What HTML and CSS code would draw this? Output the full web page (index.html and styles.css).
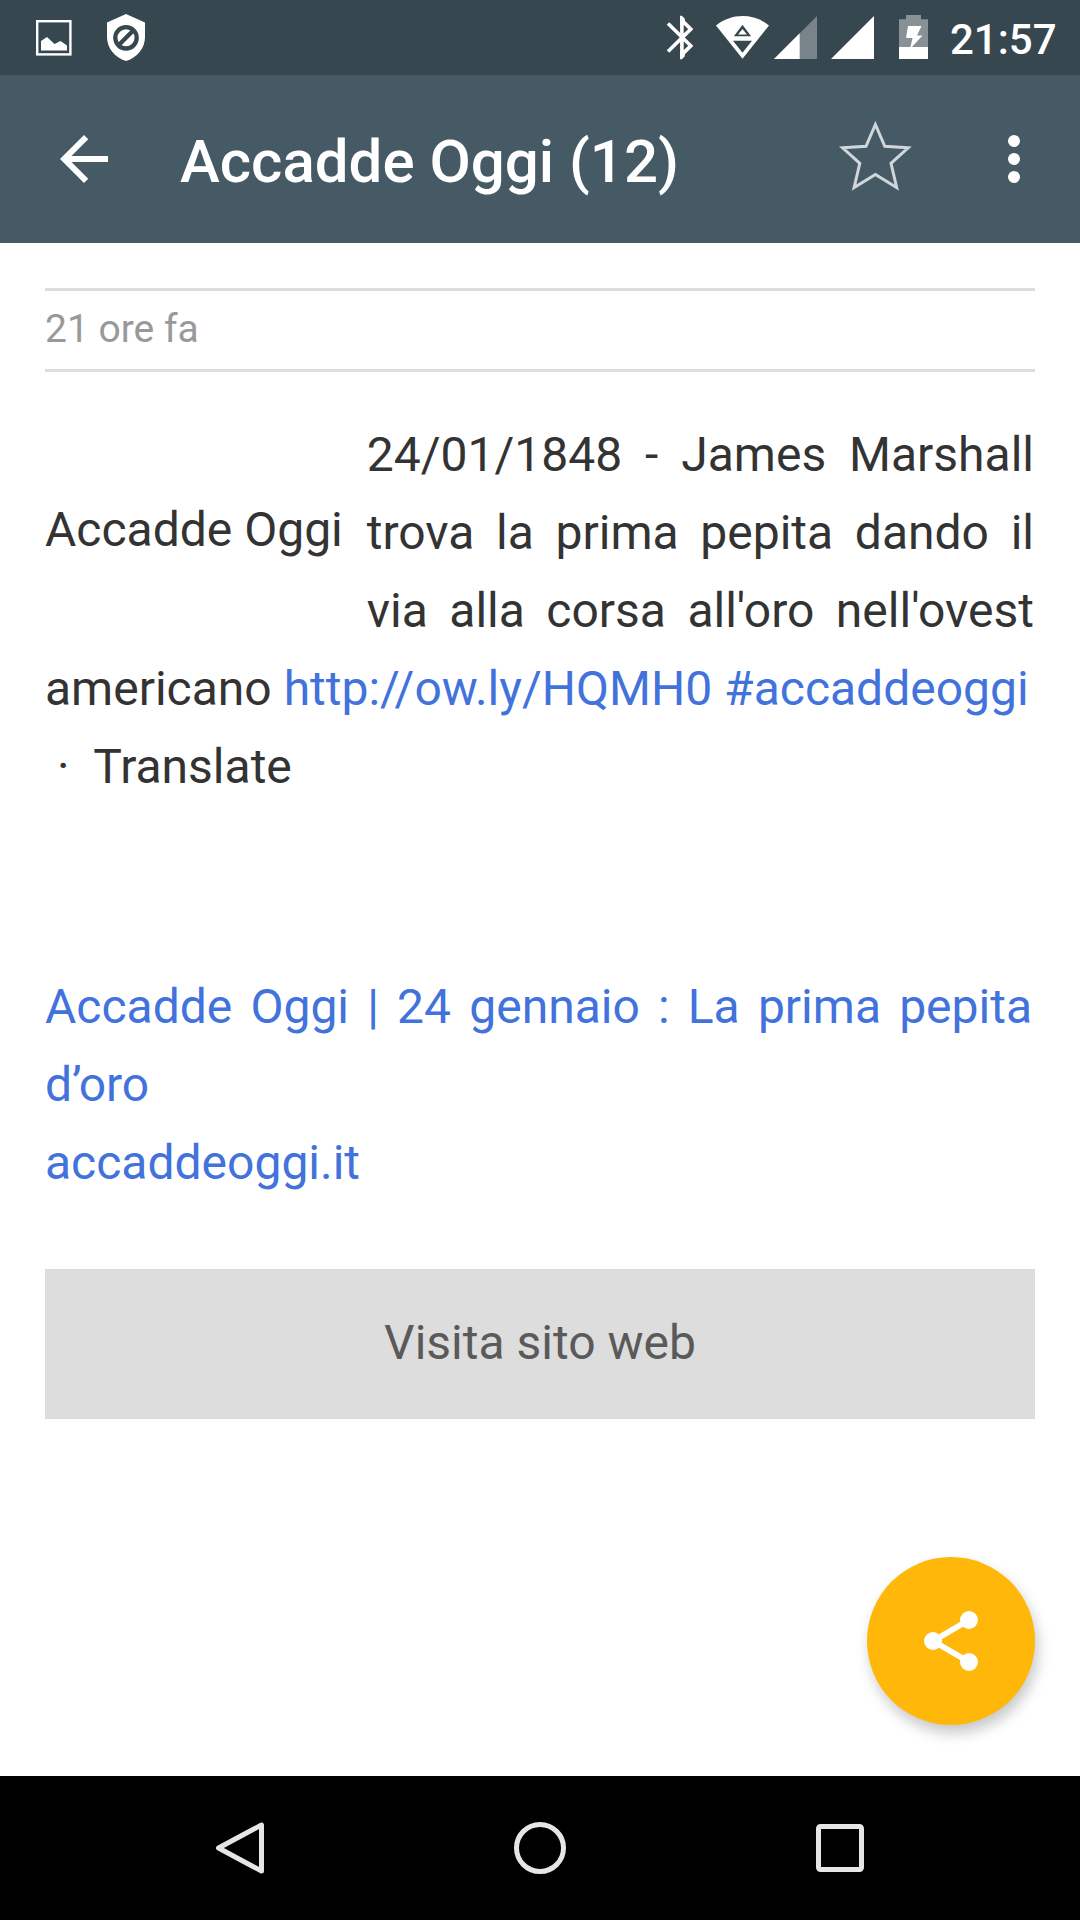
FILE: index.html
```html
<!DOCTYPE html>
<html lang="it">
<head>
    <meta charset="UTF-8">
    <meta name="viewport" content="width=device-width, initial-scale=1.0">
    <title>Accadde Oggi (12)</title>
    <link rel="stylesheet" href="styles.css">
</head>
<body>
    <div class="status">
        <svg class="picture" width="36" height="75" viewBox="36 0 36 75">
            <rect x="37.2" y="21.2" width="33.2" height="33.2" fill="none" stroke="#fff" stroke-width="2.4"/>
            <path fill="#fff" d="M41 50.5V41l6-4 7.5 7 6-3 6.500 4.500v5z"/>
        </svg>
        <svg class="shield" width="38" height="75" viewBox="107 0 38 75">
            <path fill="#fff" d="M126 14l19 8.500V37c0 11-7.500 20.500-19 24-11.500-3.500-19-13-19-24V22.500z"/>
            <circle cx="126" cy="37.800" r="10.700" fill="none" stroke="#37474f" stroke-width="4.300"/>
            <path stroke="#37474f" stroke-width="4.300" d="M118.500 45.300l15-15"/>
        </svg>
        <svg class="bluetooth" width="27" height="75" viewBox="666 0 27 75">
            <path fill="none" stroke="#fff" stroke-width="3.600" d="M668 23.500l22.800 22.300L681.900 54.600V20.400l8.900 8.700L668 51.500"/>
            <path fill="#fff" d="M680 15.800h1.800l3 3v5H680zM680 59.200h1.800l3-3v-5H680z"/>
        </svg>
        <svg class="wifi" width="53" height="75" viewBox="716 0 53 75">
            <path fill="#fff" d="M716 25.500c15.500-12.700 37.500-12.700 53 0L742.500 58.700z"/>
            <path fill="#37474f" d="M742.500 24.700l8.600 11.500h-17.200zM733 40.700h19l-9.500 12z"/>
            <path fill="#fff" d="M742.500 29l4.500 5.500h-9z"/>
        </svg>
        <svg class="signal" width="43" height="75" viewBox="774 0 43 75">
            <path fill="#78838a" d="M817 16v43h-43z"/>
            <path fill="#fff" d="M799.700 33.300V59H774z"/>
        </svg>
        <svg class="signal-full" width="43" height="75" viewBox="831 0 43 75">
            <path fill="#fff" d="M874 16v43h-43z"/>
        </svg>
        <svg class="battery" width="29" height="75" viewBox="899 0 29 75">
            <path fill="#879196" d="M906 15h15v4.300h7V59h-29V19.300h7z"/>
            <path fill="#fff" d="M899 47h29v12h-29zM908 26h13.500l-4.500 9.500h5.500L910 49l2.500-11h-6.500z"/>
        </svg>
        <span class="time">21:57</span>
    </div>

    <div class="bar">
        <svg class="back" width="72" height="72" viewBox="0 0 24 24">
            <path fill="#fff" d="M20 11H7.830l5.590-5.590L12 4l-8 8 8 8 1.410-1.410L7.830 13H20v-2z"/>
        </svg>
        <h1>Accadde Oggi (12)</h1>
        <svg class="star" width="76" height="72" viewBox="837 120 76 72">
            <path fill="none" stroke="#d0d6d9" stroke-width="3" d="M875.400 124.500l9.400 21.800 23.400 1.500-17.200 15.500 5.700 24.200-21.300-13-21.300 13 5.700-24.200-17.200-15.500 23.400-1.500z"/>
        </svg>
        <svg class="more" width="72" height="72" viewBox="0 0 24 24">
            <g fill="#fff"><circle cx="12" cy="6" r="2"/><circle cx="12" cy="12" r="2"/><circle cx="12" cy="18" r="2"/></g>
        </svg>
    </div>

    <div class="content">
        <div class="date">21 ore fa</div>
        <div class="tweet">
            <span class="author">Accadde Oggi</span>
            24/01/1848 - James Marshall trova la prima pepita dando il via alla corsa all'oro nell'ovest americano <a href="#">http://ow.ly/HQMH0</a> <a href="#">#accaddeoggi</a><br>
            &nbsp;·&nbsp;&nbsp;Translate
        </div>
        <div class="card">
            <a href="#">Accadde Oggi | 24 gennaio : La prima pepita d’oro<br>accaddeoggi.it</a>
        </div>
        <a class="visit" href="#">Visita sito web</a>
    </div>

    <div class="share">
        <svg width="72" height="72" viewBox="915 1605 72 72">
            <path fill="none" stroke="#fff" stroke-width="5.600" d="M969 1620l-36 21 36 21"/>
            <g fill="#fff"><circle cx="933" cy="1641" r="9"/><circle cx="969" cy="1620" r="9"/><circle cx="969" cy="1662" r="9"/></g>
        </svg>
    </div>

    <div class="nav">
        <svg width="60" height="60" viewBox="210 1818 60 60">
            <path fill="none" stroke="#e6e6e6" stroke-width="5" stroke-linejoin="round" d="M261.500 1825v46L218.500 1848z"/>
        </svg>
        <svg width="60" height="60" viewBox="510 1818 60 60">
            <circle cx="540" cy="1848" r="23.500" fill="none" stroke="#e6e6e6" stroke-width="5"/>
        </svg>
        <svg width="60" height="60" viewBox="810 1818 60 60">
            <rect x="818.500" y="1826.500" width="43" height="43" rx="2" fill="none" stroke="#e6e6e6" stroke-width="5"/>
        </svg>
    </div>
</body>
</html>
```

FILE: styles.css
```css
*{
    margin:0;
    padding:0;
    box-sizing: border-box;
}
body{
    height: 1920px;
    display: flex;
    flex-direction: column;
    overflow: hidden;
    background-color:#fff;
    color:#333;
    font-family: Roboto, "Liberation Sans", sans-serif;
}
svg{
    display: block;
    flex: none;
}
a{
    color:#4272db;
    text-decoration: none;
}

/* status bar */
.status{
    height: 75px;
    padding:0 26px 0 36px;
    display: flex;
    background-color:#37474f;
}
.shield{
    margin-left: 35px;
}
.bluetooth{
    margin-left: auto;
}
.wifi{
    margin-left: 23px;
}
.signal{
    margin-left: 5px;
}
.signal-full{
    margin-left: 14px;
}
.battery{
    margin-left: 25px;
}
.time{
    width: 104px;
    margin-left: 22px;
    color:#fff;
    font-size: 42px;
    font-weight: 500;
    line-height: 80px;
    white-space: nowrap;
}

/* app bar */
.bar{
    height: 168px;
    padding:0 30px 0 48px;
    display: flex;
    align-items: center;
    background-color:#455a64;
}
.bar h1{
    flex: 1;
    padding-top: 5px;
    margin-left: 60px;
    color:#fff;
    font-size: 60px;
    font-weight: 500;
    line-height: 72px;
}
.star{
    margin-top: -6px;
}
.more{
    margin-left: 65px;
}

/* article */
.content{
    flex: 1;
    padding:45px 45px 0;
    font-size: 48px;
    line-height: 78px;
}
.date{
    height: 84px;
    border-top:3px solid #ddd;
    border-bottom:3px solid #ddd;
    color:#999;
    font-size: 39px;
    line-height: 76px;
}
.tweet{
    margin-top: 44px;
    padding-right: 1px;
    text-align: justify;
}
.author{
    float: left;
    height: 234px;
    padding-top: 75px;
    margin-right: 24px;
}
.card{
    margin-top: 162px;
    padding-right: 3px;
    text-align: justify;
}
.visit{
    display: block;
    height: 150px;
    margin-top: 67px;
    background-color:#ddd;
    color:#5a5a5a;
    text-align: center;
    line-height: 148px;
}

/* floating button */
.share{
    width: 168px;
    height: 168px;
    position: absolute;
    left:867px;
    top:1557px;
    display: flex;
    align-items: center;
    justify-content: center;
    border-radius:50%;
    background-color:#ffb80a;
    box-shadow:3px 8px 14px rgba(0,0,0,0.22);
}

.nav{
    height: 144px;
    padding:0 210px;
    display: flex;
    align-items: center;
    justify-content: space-between;
    background-color:#000;
}
```
